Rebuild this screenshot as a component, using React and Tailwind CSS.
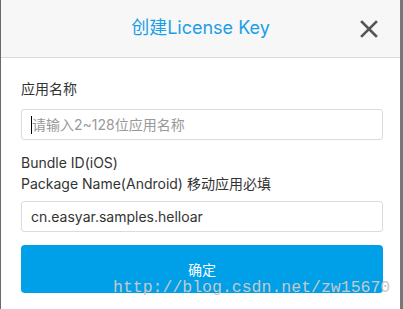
import React from 'react';

const font = { fontFamily: 'Inter, "Noto Sans CJK SC", sans-serif' };

export default function App() {
  return (
    <div className="relative w-[403px] h-[309px] overflow-hidden bg-white border-l border-l-[#6a6a6a] border-r-[3px] border-r-[#777]" style={font}>
      {/* header */}
      <div className="relative h-[58px] bg-[#f7f7f7] border-b border-[#dcdcdc] flex items-center justify-center">
        <h1 className="text-[18px] text-[#1a9fe6] leading-none pb-[1px]">创建License Key</h1>
        <button className="absolute right-[22px] top-[20px] text-[#555]">
          <svg width="18" height="18" viewBox="0 0 18 18">
            <path d="M2 2 L16 16 M16 2 L2 16" stroke="#555" strokeWidth="2.6" strokeLinecap="square" />
          </svg>
        </button>
      </div>

      {/* body */}
      <div className="px-[20px] pt-[20px] flex flex-col">
        <label className="text-[14px] text-[#333] leading-[21px]">应用名称</label>
        <div className="mt-[10px] h-[31px] w-[362px] border border-[#dcdcdc] rounded-[3px] flex items-center px-[9px]">
          <span className="w-[1px] h-[18px] bg-black"></span>
          <span className="text-[14px] text-[#999]">请输入2~128位应用名称</span>
        </div>

        <div className="mt-[12px] text-[14px] text-[#333] leading-[21px]">
          <div>Bundle ID(iOS)</div>
          <div>Package Name(Android) 移动应用必填</div>
        </div>
        <div className="mt-[7px] h-[31px] w-[362px] border border-[#dcdcdc] rounded-[3px] flex items-center px-[9px]">
          <span className="text-[14px] text-[#333]">cn.easyar.samples.helloar</span>
        </div>

        <button className="mt-[13px] h-[48px] w-[362px] bg-[#00a0e9] rounded-[4px] text-white text-[14px]">
          确定
        </button>
      </div>

      {/* watermark */}
      <div className="absolute left-[112px] top-[280px] text-[16.5px] text-[#c8c8c8] leading-none" style={{ fontFamily: '"Liberation Mono", monospace' }}>
        http://blog.csdn.net/zw15670
      </div>
    </div>
  );
}
